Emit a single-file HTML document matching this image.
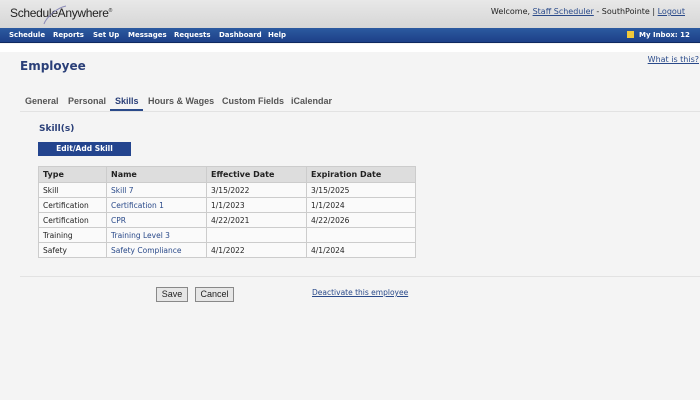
<!DOCTYPE html>
<html><head><style>
*{margin:0;padding:0;box-sizing:border-box}
body{width:700px;height:400px;background:#f4f4f4;font-family:"DejaVu Sans","Liberation Sans",sans-serif;font-size:8px;color:#222;position:relative;overflow:hidden}
.abs{position:absolute}
a{color:#2a4a8a}
#top{left:0;top:0;width:700px;height:28px;background:linear-gradient(#e8e8e8,#d6d6d6)}
#nav{left:0;top:28px;width:700px;height:15px;background:linear-gradient(#2c5aa0,#1d4088);border-bottom:1px solid #0f2a60}
#nav span{position:absolute;top:3px;color:#fff;font-weight:bold;font-size:7px}
td,th{border:1px solid #ccc;padding:0 4px;height:15px;text-align:left;font-size:7.5px}
th{background:#ddd;font-weight:bold;font-size:8px;height:16px}
table{border-collapse:collapse;background:#fafafa}
.btn{position:absolute;background:#e6e6e6;border:1px solid #888;font-family:"Liberation Sans",sans-serif;font-size:9px;text-align:center;line-height:13px}
.tab{position:absolute;top:96px;font-family:"Liberation Sans",sans-serif;font-size:9px;font-weight:bold;color:#555;white-space:nowrap}
</style></head><body>
<div id="top" class="abs"></div>
<div class="abs" style="left:10px;top:6px;font-family:'Liberation Sans',sans-serif;font-size:12px;color:#222;letter-spacing:-0.3px">Schedul<i>e</i>Anywhere<sup style="font-size:5px">®</sup></div>
<svg class="abs" style="left:38px;top:4px" width="30" height="22"><path d="M28 2 C18 4 8 14 6 20" stroke="#8a8ab8" fill="none" stroke-width="1"/></svg>
<div class="abs" style="right:15px;top:7px;font-size:8px">Welcome, <a href="#">Staff Scheduler</a> - SouthPointe | <a href="#">Logout</a></div>
<div id="nav" class="abs">
<span style="left:9px">Schedule</span><span style="left:53px">Reports</span><span style="left:93px">Set Up</span><span style="left:128px">Messages</span><span style="left:174px">Requests</span><span style="left:219px">Dashboard</span><span style="left:268px">Help</span>
<span style="left:627px;top:3px;width:7px;height:7px;background:#f2c93a"></span><span style="left:639px">My Inbox: 12</span></div>
<div class="abs" style="left:0;top:44px;width:700px;height:8px;background:#fff"></div>
<div class="abs" style="left:20px;top:59px;font-size:12px;font-weight:bold;color:#2a3f78">Employee</div>
<div class="abs" style="right:1px;top:55px;font-size:8px;white-space:nowrap"><a href="#">What is this?</a></div>
<span class="tab" style="left:25px">General</span>
<span class="tab" style="left:68px">Personal</span>
<span class="tab" style="left:115px;color:#2a3f78">Skills</span>
<span class="tab" style="left:148px">Hours &amp; Wages</span>
<span class="tab" style="left:222px">Custom Fields</span>
<span class="tab" style="left:291px">iCalendar</span>
<div class="abs" style="left:110px;top:109px;width:33px;height:2px;background:#2a4a8a"></div>
<div class="abs" style="left:20px;top:111px;width:680px;height:1px;background:#e2e2e2"></div>
<div class="abs" style="left:39px;top:124px;font-size:9px;font-weight:bold;color:#2a3f78">Skill(s)</div>
<div class="abs" style="left:38px;top:142px;width:93px;height:14px;background:#23448e;color:#fff;font-weight:bold;font-size:7.5px;text-align:center;line-height:14px">Edit/Add Skill</div>
<table class="abs" style="left:38px;top:166px;width:378px">
<tr><th style="width:68px">Type</th><th style="width:100px">Name</th><th style="width:100px">Effective Date</th><th>Expiration Date</th></tr>
<tr><td>Skill</td><td><a>Skill 7</a></td><td>3/15/2022</td><td>3/15/2025</td></tr>
<tr><td>Certification</td><td><a>Certification 1</a></td><td>1/1/2023</td><td>1/1/2024</td></tr>
<tr><td>Certification</td><td><a>CPR</a></td><td>4/22/2021</td><td>4/22/2026</td></tr>
<tr><td>Training</td><td><a>Training Level 3</a></td><td></td><td></td></tr>
<tr><td>Safety</td><td><a>Safety Compliance</a></td><td>4/1/2022</td><td>4/1/2024</td></tr>
</table>
<div class="abs" style="left:20px;top:276px;width:680px;height:1px;background:#e2e2e2"></div>
<div class="btn" style="left:156px;top:287px;width:32px;height:15px">Save</div>
<div class="btn" style="left:195px;top:287px;width:39px;height:15px">Cancel</div>
<div class="abs" style="left:312px;top:288px;font-size:7.5px"><a href="#">Deactivate this employee</a></div>
</body></html>
